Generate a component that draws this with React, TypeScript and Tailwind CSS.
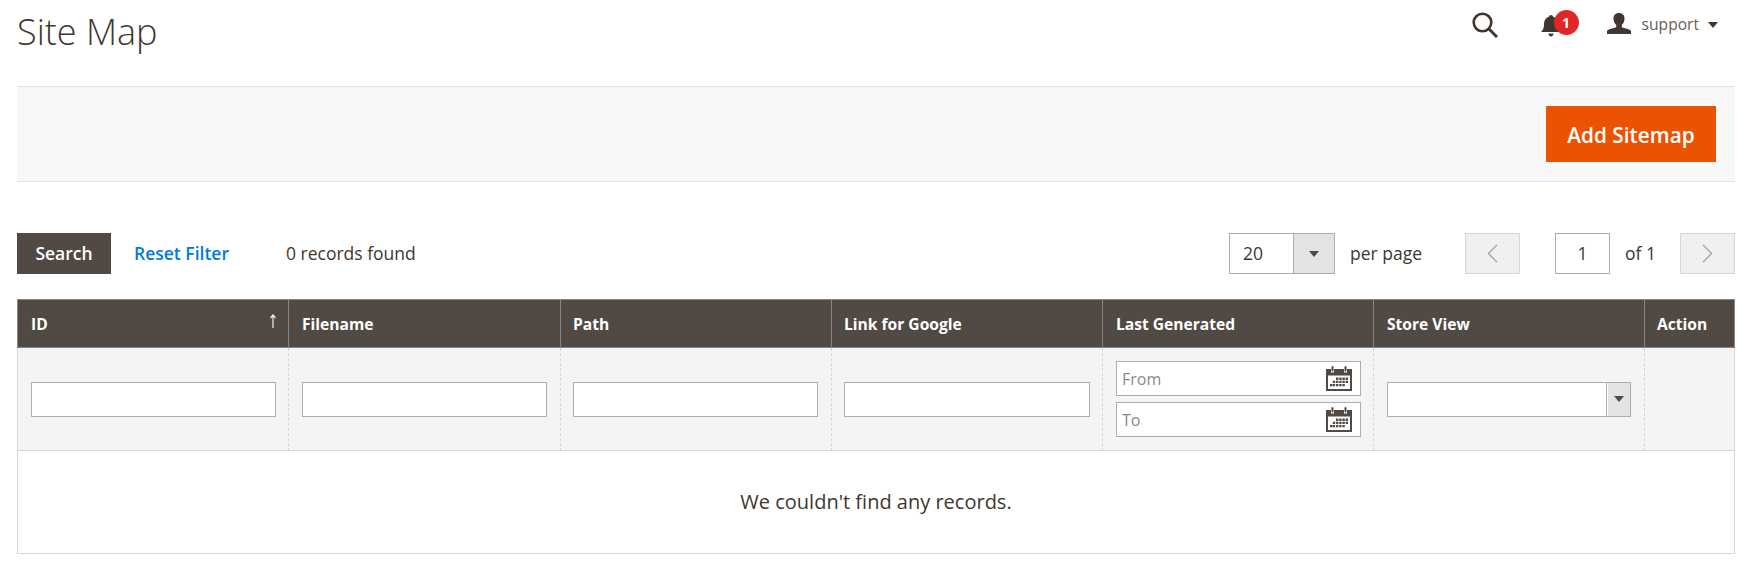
import { ChevronLeft, ChevronRight } from "lucide-react";

const font = "font-['Open_Sans',sans-serif]";

const columns = [
  { label: "ID", w: "w-[272px]", pad: "pl-[13px]" },
  { label: "Filename", w: "w-[272px]", pad: "pl-[13px]" },
  { label: "Path", w: "w-[271px]", pad: "pl-[12px]" },
  { label: "Link for Google", w: "w-[271px]", pad: "pl-[12px]" },
  { label: "Last Generated", w: "w-[271px]", pad: "pl-[13px]" },
  { label: "Store View", w: "w-[271px]", pad: "pl-[13px]" },
  { label: "Action", w: "w-[90px]", pad: "pl-[12px]" },
];

const filterCell = "border-b border-r border-[#d6d6d6] [border-right-style:dashed] bg-[#f4f4f4]";

function Caret({ className }: { className: string }) {
  return (
    <svg viewBox="0 0 10 6" className={className} fill="currentColor">
      <path d="M0 0h10L5 6z" />
    </svg>
  );
}

function CalendarIcon() {
  return (
    <svg viewBox="0 0 26 25" className="h-[25px] w-[26px] shrink-0 text-[#514943]" fill="currentColor">
      <path d="M0 3h5v3.500h3V3h10v3.500h3V3h5v22H0zM2 9.500V23h22V9.500z" fillRule="evenodd" />
      <rect x="5.500" y="0" width="2" height="5.500" rx="1" />
      <rect x="18.500" y="0" width="2" height="5.500" rx="1" />
      <path d="M10 11.500h2.400v2.400H10zM13.200 11.500h2.400v2.400h-2.400zM16.400 11.500h2.400v2.400h-2.400zM19.600 11.500H22v2.400h-2.400zM6.800 14.700h2.400v2.400H6.800zM10 14.700h2.400v2.400H10zM13.200 14.700h2.400v2.400h-2.400zM16.400 14.700h2.400v2.400h-2.400zM19.600 14.700H22v2.400h-2.400zM4 17.900h2.400v2.400H4zM6.800 17.900h2.400v2.400H6.800zM10 17.900h2.400v2.400H10zM13.200 17.900h2.400v2.400h-2.400zM16.400 17.900h2.400v2.400h-2.400z" />
    </svg>
  );
}

function TextFilter() {
  return <input type="text" className="block h-[35px] w-full border border-[#adadad] bg-white outline-none" />;
}

function DateFilter({ placeholder }: { placeholder: string }) {
  return (
    <div className="flex h-[35px] items-center justify-between border border-[#adadad] bg-white pl-[5px] pr-[8px]">
      <span className="text-[16px] text-[#8a8a8a]">{placeholder}</span>
      <CalendarIcon />
    </div>
  );
}

export default function App() {
  return (
    <div className={`${font} h-[581px] overflow-hidden bg-white pl-[17px] pr-[22px] text-[#41362f]`}>
      {/* header */}
      <header className="flex h-[86px] items-start justify-between">
        <h1 className="mt-[8px] text-[36px] font-light leading-[48px]">Site Map</h1>
        <div className="flex items-center pr-[17px] pt-[12px]">
          <svg viewBox="0 0 26 26" className="h-[26px] w-[26px]" fill="none" stroke="#41362f">
            <circle cx="10.500" cy="10.500" r="8.800" strokeWidth="2.600" />
            <path d="M17 17l8 8" strokeWidth="3" />
          </svg>
          <div className="relative ml-[43px] h-[26px] w-[38px]">
            <svg viewBox="0 0 20 22" className="absolute left-0 top-[3px] h-[22px] w-[20px]" fill="#41362f">
              <path d="M10 0c1 0 2 .8 2 1.800C15.500 2.800 17 5.500 17 9c0 4 1 6 3 8H0c2-2 3-4 3-8 0-3.500 1.500-6.200 5-7.200C8 .8 9 0 10 0zM7.500 18.500h5c0 1.500-1 3-2.500 3s-2.500-1.500-2.500-3z" />
            </svg>
            <span className="absolute left-[13px] top-[-2px] flex h-[25px] w-[25px] items-center justify-center rounded-full bg-[#e22626] text-[14px] font-bold text-white">
              1
            </span>
          </div>
          <svg viewBox="0 0 24 21" className="-mt-[3px] ml-[28px] h-[21px] w-[24px]" fill="#41362f">
            <path d="M12 0c3.500 0 5.500 2.300 5.500 5.500 0 2.800-1 5-2.700 6.500v2.300c3 1.200 8 1.800 9.200 3.700V21H0v-3c1.200-1.900 6.200-2.500 9.200-3.700V12C7.500 10.500 6.500 8.300 6.500 5.500 6.500 2.300 8.500 0 12 0z" />
          </svg>
          <span className="ml-[11px] text-[15.600px] text-[#676056]">support</span>
          <Caret className="ml-[9px] h-[6px] w-[10px] text-[#41362f]" />
        </div>
      </header>

      {/* page actions */}
      <div className="flex h-[96px] items-center justify-end border-y border-[#e3e3e3] bg-[#f8f8f8] pr-[19px]">
        <button className="h-[56px] w-[170px] bg-[#eb5202] pt-[3px] text-[20.800px] font-semibold text-white">
          Add Sitemap
        </button>
      </div>

      {/* toolbar */}
      <div className="mt-[51px] flex h-[41px] items-center text-[17.500px]">
        <button className="h-[41px] w-[94px] bg-[#514943] font-semibold text-white">Search</button>
        <a className="ml-[23px] font-semibold text-[#007bdb]">Reset Filter</a>
        <span className="ml-[57px]">0 records found</span>
        <div className="ml-auto flex items-center">
          <div className="flex h-[41px] w-[106px] border border-[#adadad]">
            <span className="flex w-[63px] items-center pl-[13px]">20</span>
            <span className="flex flex-1 items-center justify-center border-l border-[#adadad] bg-[#e3e3e3]">
              <Caret className="h-[6px] w-[10px] text-[#514943]" />
            </span>
          </div>
          <span className="ml-[15px]">per page</span>
          <button className="ml-[43px] flex h-[41px] w-[55px] items-center justify-center border border-[#d6d6d6] bg-[#f0f0f0] text-[#adadad]">
            <ChevronLeft size={33} strokeWidth={1.2} />
          </button>
          <span className="ml-[35px] flex h-[41px] w-[55px] items-center justify-center border border-[#adadad]">1</span>
          <span className="ml-[15px]">of 1</span>
          <button className="ml-[24px] flex h-[41px] w-[55px] items-center justify-center border border-[#d6d6d6] bg-[#f0f0f0] text-[#adadad]">
            <ChevronRight size={33} strokeWidth={1.2} />
          </button>
        </div>
      </div>

      {/* grid */}
      <table className="mt-[25px] w-[1718px] table-fixed border-separate border-spacing-0 text-[15.600px]">
        <colgroup>
          {columns.map((c) => (
            <col key={c.label} className={c.w} />
          ))}
        </colgroup>
        <thead>
          <tr>
            {columns.map((c, i) => (
              <th
                key={c.label}
                className={`relative h-[49px] border-y border-r border-[#8a837f] bg-[#514943] pt-[2px] text-left font-bold text-white ${c.pad} ${i === 0 ? "border-l" : ""}`}
              >
                {c.label}
                {i === 0 && (
                  <svg viewBox="0 0 8 14" className="absolute right-[11px] top-[14px] h-[14px] w-[8px]" fill="none" stroke="#f2efe9">
                    <path d="M4 14V1M1.500 4L4 1l2.500 3" strokeWidth="1.200" />
                  </svg>
                )}
              </th>
            ))}
          </tr>
        </thead>
        <tbody>
          <tr>
            <td className={`${filterCell} h-[103px] border-l [border-left-style:solid] pl-[13px] pr-[12px]`}>
              <TextFilter />
            </td>
            <td className={`${filterCell} px-[13px]`}>
              <TextFilter />
            </td>
            <td className={`${filterCell} pl-[12px] pr-[13px]`}>
              <TextFilter />
            </td>
            <td className={`${filterCell} px-[12px]`}>
              <TextFilter />
            </td>
            <td className={`${filterCell} pl-[13px] pr-[12px]`}>
              <div className="flex flex-col gap-[6px]">
                <DateFilter placeholder="From" />
                <DateFilter placeholder="To" />
              </div>
            </td>
            <td className={`${filterCell} px-[13px]`}>
              <div className="flex h-[35px] border border-[#adadad] bg-white">
                <span className="flex-1" />
                <span className="flex w-[24px] items-center justify-center border-l border-[#adadad] bg-[#e3e3e3] shadow-[inset_1px_0_0_#fff]">
                  <Caret className="h-[6px] w-[10px] text-[#514943]" />
                </span>
              </div>
            </td>
            <td className="border-b border-r border-[#d6d6d6] bg-[#f4f4f4]" />
          </tr>
          <tr>
            <td colSpan={7} className="h-[103px] border-x border-b border-[#d6d6d6] text-center text-[20px]">
              We couldn't find any records.
            </td>
          </tr>
        </tbody>
      </table>
    </div>
  );
}
